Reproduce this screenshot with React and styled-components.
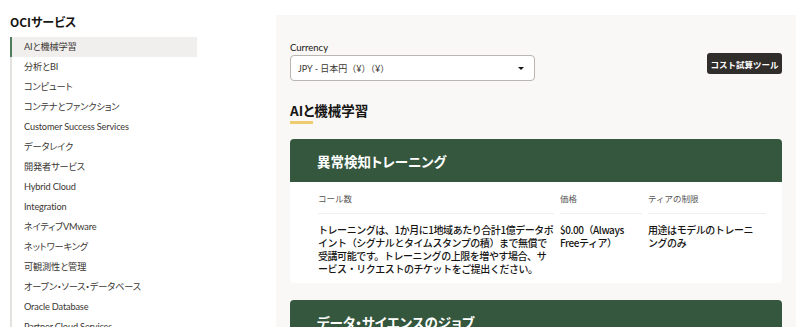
import styled, { createGlobalStyle } from "styled-components"

const Global = createGlobalStyle`
  html, body {
    margin: 0;
    padding: 0;
    overflow: hidden;
    background: #fff;
  }
  body {
    font-family: "Lato", "Noto Sans CJK JP", sans-serif;
    color: #161513;
  }
`

const services = [
  "AIと機械学習",
  "分析とBI",
  "コンピュート",
  "コンテナとファンクション",
  "Customer Success Services",
  "データレイク",
  "開発者サービス",
  "Hybrid Cloud",
  "Integration",
  "ネイティブVMware",
  "ネットワーキング",
  "可観測性と管理",
  "オープン・ソース・データベース",
  "Oracle Database",
  "Partner Cloud Services",
]

export default () => {
  return (
    <Page>
      <Global />
      <Sidebar>
        <SideTitle>OCIサービス</SideTitle>
        <Nav>
          {services.map((s, i) => (
            <NavItem key={s} active={i === 0}>{s}</NavItem>
          ))}
        </Nav>
      </Sidebar>
      <Main>
        <TopRow>
          <Field>
            <Label>Currency</Label>
            <Select>
              <span>JPY - 日本円（¥）（¥）</span>
              <Caret />
            </Select>
          </Field>
          <Button>コスト試算ツール</Button>
        </TopRow>
        <Heading>AIと機械学習</Heading>
        <Underline />
        <Card>
          <CardHead>異常検知トレーニング</CardHead>
          <Grid>
            <Th>コール数</Th>
            <Th>価格</Th>
            <Th>ティアの制限</Th>
            <Td>
              トレーニングは、1か月に1地域あたり合計1億データポ<br />
              イント（シグナルとタイムスタンプの積）まで無償で<br />
              受講可能です。トレーニングの上限を増やす場合、サ<br />
              ービス・リクエストのチケットをご提出ください。
            </Td>
            <Td>
              $0.00（Always<br />
              Freeティア）
            </Td>
            <Td>
              用途はモデルのトレーニ<br />
              ングのみ
            </Td>
          </Grid>
        </Card>
        <Card>
          <CardHead>データ・サイエンスのジョブ</CardHead>
        </Card>
      </Main>
    </Page>
  )
}

const Page = styled.div`
  display: flex;
  width: 800px;
  height: 327px;
  overflow: hidden;
`

const Sidebar = styled.div`
  width: 266px;
  flex-shrink: 0;
  padding: 14px 0 0 10px;
`

const SideTitle = styled.div`
  font-family: "Noto Sans CJK JP", sans-serif;
  font-feature-settings: "palt";
  font-size: 12px;
  line-height: 16px;
  font-weight: 700;
  color: #161513;
  margin-bottom: 7px;
`

const Nav = styled.div`
  width: 185px;
  border-left: 2px solid #e4e2df;
  display: flex;
  flex-direction: column;
`

const NavItem = styled.div`
  height: 20px;
  line-height: 20px;
  font-size: 9.2px;
  font-feature-settings: "palt";
  letter-spacing: -0.15px;
  padding-left: 12px;
  margin-left: -2px;
  color: #3a3632;
  border-left: 2px solid ${p => (p.active ? "#4d7d5b" : "transparent")};
  background: ${p => (p.active ? "#f1efed" : "transparent")};
  white-space: nowrap;
`

const Main = styled.div`
  flex: 1;
  margin: 15px 4px 0 0;
  padding: 27px 14px 0 14px;
  background: #f9f8f6;
`

const TopRow = styled.div`
  display: flex;
  justify-content: space-between;
  align-items: center;
`

const Field = styled.div`
  display: flex;
  flex-direction: column;
`

const Label = styled.div`
  font-size: 9.5px;
  line-height: 12px;
  color: #161513;
  margin-bottom: 1px;
`

const Select = styled.div`
  box-sizing: border-box;
  width: 245px;
  height: 26px;
  border: 1px solid #b9b6b2;
  border-radius: 4px;
  background: #fff;
  display: flex;
  align-items: center;
  justify-content: space-between;
  padding: 0 10px 0 7px;
  font-size: 9px;
  color: #3a3632;
`

const Caret = styled.span`
  width: 0;
  height: 0;
  border-left: 3px solid transparent;
  border-right: 3px solid transparent;
  border-top: 3px solid #161513;
`

const Button = styled.div`
  width: 75px;
  height: 21px;
  margin-top: 4px;
  border-radius: 3px;
  background: #312d2a;
  color: #fff;
  font-size: 8.5px;
  font-weight: 700;
  display: flex;
  align-items: center;
  justify-content: center;
`

const Heading = styled.h2`
  margin: 20px 0 0 0;
  font-family: "Noto Sans CJK JP", sans-serif;
  font-feature-settings: "palt";
  font-size: 13.5px;
  line-height: 18px;
  font-weight: 700;
  color: #161513;
`

const Underline = styled.div`
  width: 23px;
  height: 3px;
  margin-top: 2px;
  background: #f0cc71;
  margin-bottom: 15px;
`

const Card = styled.div`
  background: #fff;
  border-radius: 4px;
  overflow: hidden;
  margin-bottom: 17px;
`

const CardHead = styled.div`
  height: 43px;
  display: flex;
  align-items: center;
  padding-left: 27px;
  background: #34573e;
  color: #fff;
  font-size: 13.5px;
  font-weight: 700;
  font-feature-settings: "palt";
  font-family: "Noto Sans CJK JP", sans-serif;
`

const Grid = styled.div`
  display: grid;
  grid-template-columns: 242px 88px 1fr;
  padding: 0 10px 8px 28px;
  font-family: "Noto Sans CJK JP", sans-serif;
`

const Th = styled.div`
  height: 31px;
  display: flex;
  align-items: center;
  font-size: 8.5px;
  color: #555;
  border-bottom: 1px solid #f1efed;
  margin-right: 6px;
`

const Td = styled.div`
  padding-top: 9px;
  font-size: 10px;
  letter-spacing: -0.45px;
  line-height: 13px;
  font-weight: 500;
  color: #161513;
  white-space: nowrap;
  overflow: hidden;
`
